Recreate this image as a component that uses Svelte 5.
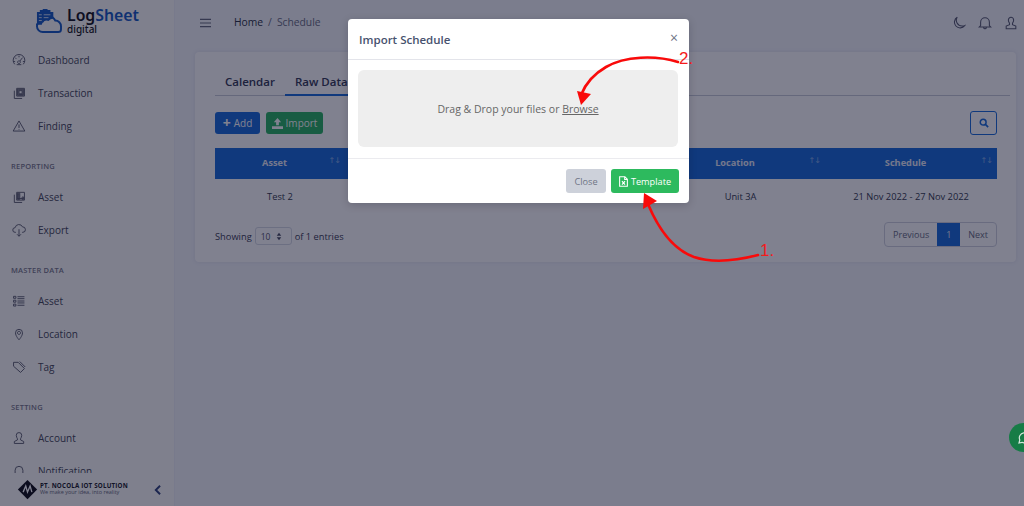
<script>
  const sections = [
    { items: [['Dashboard','gauge'],['Transaction','stack'],['Finding','warn']] },
    { title: 'REPORTING', items: [['Asset','stack2'],['Export','cloud']] },
    { title: 'MASTER DATA', items: [['Asset','list'],['Location','pin'],['Tag','tag']] },
    { title: 'SETTING', items: [['Account','user'],['Notification','bell']] }
  ];
  const paths = {
    gauge: 'M3.500 14.500a7.500 7.500 0 1 1 11 0M1.500 11h2.500M14 11h2.500M9 3.500v2M4 6l1.500 1.500M13.500 6l-3.500 4.500M9 10a1.800 1.800 0 1 0 .01 0M6 15h6',
    stack: 'M3 6v10h10M6 3h10v10H6zM7 4h8v8H7zM8 5h6v6H8zM9 6h4v4H9z',
    warn: 'M9 2.500 16.500 15.500h-15zM9 7v4.500M9 13v.8',
    stack2: 'M3 6v10h10M6 3h10v10H6zM7 4h3v8H7zM8 5h1v6H8zM13 9h2v3h-2zM7 11h8',
    cloud: 'M5 12H4a3 3 0 0 1 0-6 5 5 0 0 1 9.500-1A3.500 3.500 0 0 1 14 12h-1M9 8v9M6.500 14.500 9 17l2.500-2.500',
    list: 'M2 3h3v2.500H2zM2 8h3v2.500H2zM2 13h3v2.500H2zM7 3.500h9M7 6h9M7 9h9M7 11.500h9M7 14.500h9',
    pin: 'M9 16.500s4.500-5 4.500-9a4.500 4.500 0 0 0-9 0c0 4 4.500 9 4.500 9zM9 5.500a2 2 0 1 0 .01 0',
    tag: 'M2 3h6l8 8-5 5-9-8zM5 6v.1M10 2l7 7',
    user: 'M9 2a3.500 3.500 0 0 0-3.500 3.500c0 2 1 3.500 1.500 4.500v1.500L3 13.500V16h12v-2.500l-4-2V10c.5-1 1.500-2.500 1.500-4.500A3.500 3.500 0 0 0 9 2z',
    bell: 'M4 13V8a5 5 0 0 1 10 0v5l1.500 2h-13zM7.500 15.500a1.500 1.500 0 0 0 3 0'
  };
</script>

<div class="app">
  <aside class="sidebar">
    <div class="brand">
      <svg class="brand-icon" viewBox="0 0 28 26" width="27" height="25">
        <path class="solid" d="M2 3h3V1h3V0h5v1h3v2h3v7a7 7 0 0 0-5 2.500 5 5 0 0 0-7 4H2z"/>
        <path class="line" d="M2 17v-2M8 24a6 6 0 0 1-6-6 5 5 0 0 1 6-5 7 7 0 0 1 13-1 6 6 0 0 1 6 6v3a3 3 0 0 1-3 3z"/>
        <path class="wline" d="M4 6h3M9 6h7M4 9h3M9 9h5M4 12h3"/>
      </svg>
      <div class="brand-text">
        <div class="brand-name"><span class="log">Log</span><span class="sheet">Sheet</span></div>
        <div class="brand-sub">digital</div>
      </div>
    </div>
    <nav class="nav">
      {#each sections as s}
        {#if s.title}<div class="nav-title">{s.title}</div>{/if}
        {#each s.items as it}
          <div class="nav-item">
            <svg viewBox="0 0 18 18" width="14" height="14"><path d={paths[it[1]]}/></svg>
            <span>{it[0]}</span>
          </div>
        {/each}
      {/each}
    </nav>
    <div class="side-foot">
      <svg class="nocola" viewBox="0 0 24 24" width="21" height="21">
        <path d="M12 1 23 12 12 23 1 12z"/>
        <path class="nw" d="M7 15l3-7 2 7 3-7 2 7"/>
      </svg>
      <div class="foot-text">
        <div class="foot-name">PT. NOCOLA IOT SOLUTION</div>
        <div class="foot-tag">We make your idea, into reality</div>
      </div>
      <svg class="chev" viewBox="0 0 10 14" width="9" height="12"><path d="M8 2 3 7l5 5"/></svg>
    </div>
  </aside>

  <main class="main">
    <header class="topbar">
      <svg class="burger" viewBox="0 0 12 10" width="11" height="10"><path d="M0 1h12M0 5h12M0 9h12"/></svg>
      <div class="crumbs"><span class="home">Home</span><span class="sep">/</span><span class="cur">Schedule</span></div>
      <div class="top-icons">
        <svg viewBox="0 0 16 16" width="14" height="14"><path d="M6 1.500a6.500 6.500 0 1 0 8.500 9.500 7 7 0 0 1-3 .5A6.500 6.500 0 0 1 6 1.500z"/></svg>
        <svg viewBox="0 0 16 16" width="14" height="14"><path d="M3 11V7a5 5 0 0 1 10 0v4l1.500 1.500h-13zM6.500 13a1.500 1.500 0 0 0 3 0"/></svg>
        <svg viewBox="0 0 16 16" width="14" height="14"><path d="M8 1.500a3 3 0 0 0-3 3c0 2 1 3 1.300 4v1.500L2.500 11.500v3h11v-3L9.700 10V8.500c.3-1 1.300-2 1.300-4a3 3 0 0 0-3-3z"/></svg>
      </div>
    </header>

    <section class="card">
      <div class="tabs">
        <div class="tab">Calendar</div>
        <div class="tab active">Raw Data</div>
      </div>
      <div class="toolbar">
        <button class="btn blue"><b class="plus">+</b> Add</button>
        <button class="btn green">
          <svg viewBox="0 0 12 12" width="11" height="11"><path d="M6 0 10 4.500H7.500V8h-3V4.500H2zM0 9h12v3H0z"/></svg>
          Import
        </button>
        <button class="search">
          <svg viewBox="0 0 12 12" width="10" height="10"><circle cx="5" cy="5" r="3.500"/><path d="M8 8l3 3"/></svg>
        </button>
      </div>
      <div class="thead">
        <div class="th c-asset">Asset<i>↑↓</i></div>
        <div class="th c-mid"></div>
        <div class="th c-loc">Location<i>↑↓</i></div>
        <div class="th c-sch">Schedule<i>↑↓</i></div>
      </div>
      <div class="trow">
        <div class="td c-asset">Test 2</div>
        <div class="td c-mid"></div>
        <div class="td c-loc">Unit 3A</div>
        <div class="td c-sch">21 Nov 2022 - 27 Nov 2022</div>
      </div>
      <div class="tfoot">
        <div class="showing">
          Showing
          <span class="select">10<svg viewBox="0 0 8 12" width="6" height="9"><path d="M4 1 7 5H1zM4 11 1 7h6z"/></svg></span>
          of 1 entries
        </div>
        <div class="pager">
          <span class="pg">Previous</span><span class="pg on">1</span><span class="pg">Next</span>
        </div>
      </div>
    </section>
  </main>

  <div class="backdrop"></div>

  <div class="wa">
    <svg viewBox="0 0 14 14" width="14" height="14"><path d="M2 12l.8-3A5 5 0 1 1 5 11.300z"/></svg>
  </div>

  <div class="modal">
    <div class="m-head">
      <span class="m-title">Import Schedule</span>
      <span class="m-x">×</span>
    </div>
    <div class="m-body">
      <div class="drop">Drag &amp; Drop your files or&nbsp;<u>Browse</u></div>
    </div>
    <div class="m-foot">
      <button class="btn close">Close</button>
      <button class="btn tpl">
        <svg viewBox="0 0 10 12" width="9" height="11"><path d="M.7.700h5.800L9.300 3.500v7.800H.7zM6.300.700v3h3M3.300 5.500l3.400 4M6.700 5.500l-3.400 4"/></svg>
        Template
      </button>
    </div>
  </div>

  <svg class="notes" viewBox="0 0 1024 506" width="1024" height="506">
    <path d="M758 255C735 261 712 263 694 257 672 249 658 228 648 204"/>
    <polygon points="644,193 643,209 657,201"/>
    <path d="M678 62C655 55 625 56 606 67 592 75 585 85 581 95"/>
    <polygon points="581,105 577,91 591,94"/>
  </svg>
  <span class="num n1">1.</span>
  <span class="num n2">2.</span>
</div>

<style>
  :global(body) { margin: 0; }
  .app {
    position: relative; width: 1024px; height: 506px; overflow: hidden; display: flex;
    background: #f4f6fb; font-family: "Open Sans", "Noto Sans", sans-serif; color: #4a4f63;
  }
  svg path { fill: none; stroke: currentColor; stroke-width: 1.2; }

  .sidebar {
    position: relative; width: 175px; height: 506px; flex: none; background: #fcfcfa; overflow: hidden;
    border-right: 1px solid #eef0f8; box-sizing: border-box;
  }
  .brand { display: flex; align-items: flex-start; padding: 9px 0 0 35px; height: 43px; box-sizing: border-box; gap: 5px; }
  .brand-icon { flex: none; }
  .brand-icon .solid { fill: #1d5fc4; stroke: none; }
  .brand-icon .line { stroke: #1d5fc4; stroke-width: 2; }
  .brand-icon .wline { stroke: #fff; stroke-width: .8; }
  .brand-text { margin-top: -1px; }
  .brand-name { font-size: 15.800px; font-weight: 600; line-height: 15px; margin-bottom: 1px; font-family: "Noto Sans", sans-serif; }
  .log { color: #1a1a24; }
  .sheet { color: #1d5fc4; }
  .brand-sub { font-size: 10px; color: #1a1a24; line-height: 10px; font-weight: 500; font-family: "Noto Sans", sans-serif; }
  .nav { height: 430px; overflow: hidden; }
  .nav-item { height: 33px; display: flex; align-items: center; padding-left: 12px; gap: 12px; font-size: 10px; color: #4a4c5c; }
  .nav-item svg { flex: none; color: #5e6070; }
  .nav-title { font-size: 7.500px; font-weight: 600; letter-spacing: .2px; color: #7c7e8e; padding-left: 11px; height: 15px; line-height: 15px; margin: 16.500px 0 6.500px; }
  .side-foot {
    height: 33px; display: flex; align-items: center; padding: 0 0 0 17px; background: #fcfcfa; gap: 2px;
  }
  .nocola { flex: none; }
  .nocola path { fill: #15151c; stroke: none; }
  .nocola .nw { fill: none; stroke: #fff; stroke-width: 1.500; }
  .foot-text { width: 93px; line-height: 1; white-space: nowrap; margin-top: -2px; }
  .foot-name { font-size: 6.200px; font-weight: 700; letter-spacing: .2px; color: #25252f; line-height: 7px; }
  .foot-tag { font-size: 5.500px; color: #6d6f80; line-height: 6px; }
  .chev { margin-left: 18px; color: #35467e; flex: none; }
  .chev path { stroke-width: 2.200; }

  .main { flex: 1; min-width: 0; padding: 0 8px 0 20px; box-sizing: border-box; }
  .topbar { height: 52px; display: flex; align-items: center; padding: 0 5px 6px 5px; box-sizing: border-box; color: #4a4f63; }
  .burger { margin-right: 23px; color: #6a6e80; }
  .crumbs { font-size: 10.300px; display: flex; gap: 5px; margin-top: -2px; }
  .home { color: #333749; }
  .sep, .cur { color: #6d7184; }
  .top-icons { margin-left: auto; display: flex; gap: 12px; color: #5c5f74; margin-right: -7px; }

  .card {
    height: 210px; background: #fff; border-radius: 4px; padding: 20px 19px 0 20px; box-sizing: border-box;
    box-shadow: 0 0 4px rgba(80,90,130,.12);
  }
  .tabs { display: flex; height: 23px; border-bottom: 1px solid #c9ccd8; width: 795px; }
  .tab { padding: 0 10px; font-size: 11.500px; font-weight: 600; color: #39405a; line-height: 19px; }
  .tab.active { border-bottom: 2px solid #1e6fdb; height: 22px; }
  .toolbar { display: flex; align-items: center; gap: 6px; margin-top: 15px; height: 24px; }
  .btn {
    border: 0; border-radius: 3px; height: 22px; font: 500 10px "Open Sans", sans-serif; color: #fff; padding: 0 8px;
    display: inline-flex; align-items: center; justify-content: center; gap: 3px;
  }
  .btn svg { flex: none; }
  .blue { background: #1e6fdb; width: 45px; padding: 0; }
  .plus { font-size: 14px; line-height: 1; font-weight: 700; }
  .green { background: #2fb466; width: 57px; padding: 0; }
  .green svg path { fill: #fff; stroke: none; }
  .search {
    margin-left: auto; width: 27px; height: 24px; border: 1.500px solid #1e6fdb; background: transparent; border-radius: 3px;
    padding: 0; display: flex; align-items: center; justify-content: center; color: #1e6fdb; box-sizing: border-box;
  }
  .search circle { fill: none; stroke: currentColor; stroke-width: 1.800; }
  .search path { stroke-width: 2; }

  .thead { display: flex; margin-top: 13px; height: 31px; background: #1e6fdb; color: #e8ecf8; }
  .trow { display: flex; height: 33px; }
  .c-asset { width: 130px; }
  .c-mid { width: 311px; }
  .c-loc { width: 169px; }
  .c-sch { width: 172px; }
  .th {
    position: relative; display: flex; align-items: center; justify-content: center; font-size: 9.200px; font-weight: 700;
    padding: 0 11px 3px 0; box-sizing: border-box;
  }
  .th i { position: absolute; right: 5px; top: 8px; font-style: normal; font-size: 8px; letter-spacing: -1px; opacity: .5; font-weight: 400; font-family: "DejaVu Sans", sans-serif; }
  .td { display: flex; align-items: center; justify-content: center; font-size: 9.300px; color: #3a3e52; box-sizing: border-box; padding-top: 1px; white-space: nowrap; }
  .tfoot { display: flex; justify-content: space-between; align-items: center; margin-top: 10px; height: 25px; font-size: 9.300px; }
  .showing { display: flex; align-items: center; gap: 3px; color: #3f4358; padding-top: 3px; }
  .select {
    width: 37px; height: 18px; border: 1px solid #d7dae4; border-radius: 3px; box-sizing: border-box; font-size: 8.500px;
    display: flex; align-items: center; justify-content: space-between; padding: 0 9px 0 5px; color: #565a70;
  }
  .select svg path { fill: #4d5166; stroke: none; }
  .pager { display: flex; border: 1px solid #d0d3df; border-radius: 4px; height: 25px; box-sizing: border-box; overflow: hidden; }
  .pg { display: flex; align-items: center; justify-content: center; padding: 0 8px; color: #6c7085; font-size: 9px; }
  .pg.on { background: #1e6fdb; color: #e8ecf8; width: 23px; padding: 0; box-sizing: border-box; }

  .backdrop { position: absolute; inset: 0; background: rgba(2, 4, 32, .5); }
  .wa {
    position: absolute; left: 1009px; top: 423px; width: 29px; height: 29px; border-radius: 50%; background: #167c46;
    display: flex; align-items: center; justify-content: center; color: #d5e6dc;
  }

  .modal {
    position: absolute; left: 348px; top: 19px; width: 341px; height: 184px; background: #fff; border-radius: 4px;
    box-shadow: 0 2px 8px rgba(0,0,20,.18); display: flex; flex-direction: column;
  }
  .m-head { height: 41px; border-bottom: 1px solid #e3e4ea; display: flex; align-items: center; justify-content: space-between; padding: 0 11px; box-sizing: border-box; }
  .m-title { font-size: 11.500px; font-weight: 600; color: #47526e; }
  .m-x { font-size: 14px; color: #6f7385; line-height: 1; margin-top: -2px; }
  .m-body { padding: 10px 11px 10px 10px; height: 99px; box-sizing: border-box; border-bottom: 1px solid #ebebef; }
  .drop {
    height: 77px; background: #eeeeee; border-radius: 6px; display: flex; align-items: center; justify-content: center;
    font-size: 10.500px; color: #666; padding-top: 1px; box-sizing: border-box;
  }
  .drop u { text-underline-offset: 1px; }
  .m-foot { flex: 1; display: flex; justify-content: flex-end; align-items: center; gap: 5px; padding: 0 10px; }
  .m-foot .btn { height: 24px; font-size: 9.200px; padding: 0; }
  .close { width: 40px; background: #cdd1da; color: #6f7585; }
  .tpl { width: 68px; background: #2dba5e; }

  .notes { position: absolute; left: 0; top: 0; pointer-events: none; }
  .notes path { stroke: #f90a0a; stroke-width: 2.600; stroke-linecap: round; }
  .notes polygon { fill: #f90a0a; }
  .num { position: absolute; color: #f41c1c; font: 17px "Liberation Sans", sans-serif; line-height: 1; }
  .n1 { left: 760px; top: 242px; }
  .n2 { left: 679px; top: 50px; }
</style>
